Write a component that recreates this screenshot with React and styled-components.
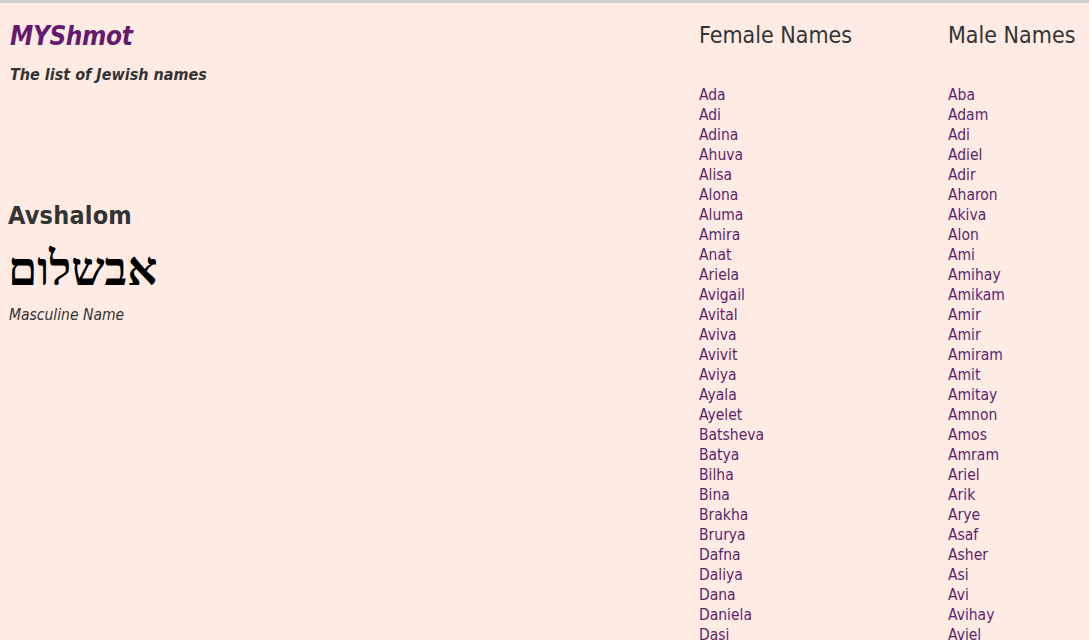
import styled, { createGlobalStyle } from "styled-components";

const female = [
  "Ada", "Adi", "Adina", "Ahuva", "Alisa", "Alona", "Aluma", "Amira", "Anat",
  "Ariela", "Avigail", "Avital", "Aviva", "Avivit", "Aviya", "Ayala", "Ayelet",
  "Batsheva", "Batya", "Bilha", "Bina", "Brakha", "Brurya", "Dafna", "Daliya",
  "Dana", "Daniela", "Dasi", "Dina", "Dorit",
];

const male = [
  "Aba", "Adam", "Adi", "Adiel", "Adir", "Aharon", "Akiva", "Alon", "Ami",
  "Amihay", "Amikam", "Amir", "Amir", "Amiram", "Amit", "Amitay", "Amnon",
  "Amos", "Amram", "Ariel", "Arik", "Arye", "Asaf", "Asher", "Asi", "Avi",
  "Avihay", "Aviel", "Avinoam", "Aviram",
];

const GlobalStyle = createGlobalStyle`
  html, body {
    margin: 0;
    padding: 0;
    background: #feebe3;
    overflow: hidden;
  }
  body {
    font-family: "DejaVu Sans Condensed", "DejaVu Sans", sans-serif;
    color: #333;
    border-top: 3px solid #cdcdcd;
  }
`;

const Page = styled.div`
  display: grid;
  grid-template-columns: 699px 249px 141px;
  height: 637px;
  overflow: hidden;
`;

const Side = styled.div`
  padding: 0 0 0 8px;
`;

const Brand = styled.h1`
  margin: 19px 0 0 2px;
  font-size: 26px;
  line-height: 28px;
  font-weight: bold;
  font-style: italic;
  color: #651a6f;
  letter-spacing: -0.4px;
`;

const Tagline = styled.p`
  margin: 15px 0 0 2px;
  font-size: 16px;
  line-height: 20px;
  font-weight: bold;
  font-style: italic;
  color: #333;
`;

const Detail = styled.section`
  margin-top: 116px;
`;

const NameTitle = styled.h2`
  margin: 0;
  font-size: 25px;
  line-height: 30px;
  font-weight: bold;
  color: #333;
  letter-spacing: 0.2px;
`;

const Hebrew = styled.div`
  margin-top: 12px;
  font-family: "Liberation Serif", "DejaVu Serif", serif;
  font-size: 47px;
  line-height: 52px;
  font-weight: bold;
  color: #000;
  direction: rtl;
  unicode-bidi: plaintext;
  width: max-content;
`;

const Gender = styled.p`
  margin: 10px 0 0 1px;
  font-size: 15.5px;
  line-height: 20px;
  font-style: italic;
  color: #333;
`;

const Column = styled.div`
  display: flex;
  flex-direction: column;
  min-width: 0;
`;

const ColumnTitle = styled.h3`
  margin: 17px 0 0;
  font-size: 23px;
  line-height: 30px;
  font-weight: normal;
  color: #333;
  white-space: nowrap;
`;

const NameList = styled.ul`
  list-style: none;
  margin: 35px 0 0;
  padding: 0;
`;

const NameLink = styled.a`
  display: block;
  font-size: 15.5px;
  line-height: 20px;
  color: #5e1f68;
  text-decoration: none;
`;

function NameColumn({ title, names }) {
  return (
    <Column>
      <ColumnTitle>{title}</ColumnTitle>
      <NameList>
        {names.map((n, i) => (
          <li key={n + i}>
            <NameLink href="#">{n}</NameLink>
          </li>
        ))}
      </NameList>
    </Column>
  );
}

export default function App() {
  return (
    <>
      <GlobalStyle />
      <Page>
        <Side>
          <Brand>MYShmot</Brand>
          <Tagline>The list of Jewish names</Tagline>
          <Detail>
            <NameTitle>Avshalom</NameTitle>
            <Hebrew>אבשלום</Hebrew>
            <Gender>Masculine Name</Gender>
          </Detail>
        </Side>
        <NameColumn title="Female Names" names={female} />
        <NameColumn title="Male Names" names={male} />
      </Page>
    </>
  );
}
